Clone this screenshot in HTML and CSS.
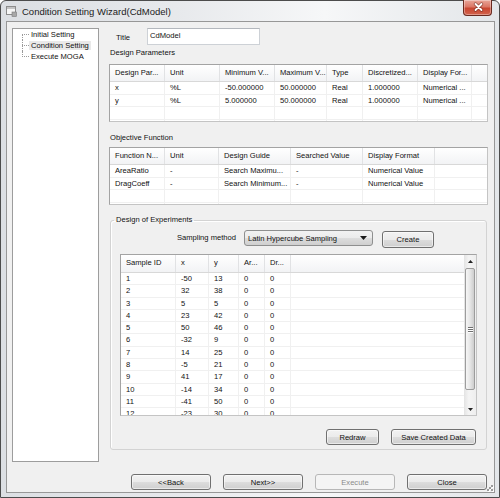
FILE: index.html
```html
<!DOCTYPE html>
<html lang="en">
<head>
  <meta charset="UTF-8" />
  <title>Condition Setting Wizard(CdModel)</title>
  <link rel="stylesheet" href="styles.css">
</head>
<body>
  <div class="window">
    <div class="titlebar">
      <svg class="app-icon" width="11" height="11" viewBox="0 0 11 11">
        <rect x="0.5" y="0.5" width="9" height="8" fill="#f6f6f6" stroke="#8c8c8c" />
        <rect x="1" y="1" width="8" height="2" fill="#c4c4c4" />
        <rect x="6" y="6" width="4.5" height="4.5" fill="#a8a8a8" stroke="#7a7a7a" stroke-width="0.6" />
      </svg>
      <span class="caption">Condition Setting Wizard(CdModel)</span>
      <div class="close-btn">
        <svg width="29" height="15" viewBox="0 0 29 15">
          <path d="M11.5 4 L17.5 10 M17.5 4 L11.5 10" stroke="#5b1d14" stroke-width="3.4" stroke-linecap="round" opacity="0.55" />
          <path d="M11.5 4 L17.5 10 M17.5 4 L11.5 10" stroke="#ffffff" stroke-width="1.8" stroke-linecap="round" />
        </svg>
      </div>
    </div>

    <div class="client">
      <div class="top">
        <div class="tree-panel">
          <ul class="tree">
            <li class="first"><span>Initial Setting</span></li>
            <li class="selected"><span>Condition Setting</span></li>
            <li class="last"><span>Execute MOGA</span></li>
          </ul>
        </div>

        <div class="main">
          <div class="title-row">
            <label class="title-label">Title</label>
            <div class="textbox">CdModel</div>
          </div>

          <div class="section-label">Design Parameters</div>
          <div class="listview">
            <div class="hrow cols-dp">
              <div class="cell">Design Par...</div>
              <div class="cell">Unit</div>
              <div class="cell">Minimum V...</div>
              <div class="cell">Maximum V...</div>
              <div class="cell">Type</div>
              <div class="cell">Discretized...</div>
              <div class="cell">Display For...</div>
              <div class="cell filler"></div>
            </div>
            <div class="row cols-dp">
              <div class="cell">x</div>
              <div class="cell">%L</div>
              <div class="cell">-50.000000</div>
              <div class="cell">50.000000</div>
              <div class="cell">Real</div>
              <div class="cell">1.000000</div>
              <div class="cell">Numerical ...</div>
              <div class="cell filler"></div>
            </div>
            <div class="row cols-dp">
              <div class="cell">y</div>
              <div class="cell">%L</div>
              <div class="cell">5.000000</div>
              <div class="cell">50.000000</div>
              <div class="cell">Real</div>
              <div class="cell">1.000000</div>
              <div class="cell">Numerical ...</div>
              <div class="cell filler"></div>
            </div>
            <div class="row cols-dp">
              <div class="cell"></div><div class="cell"></div><div class="cell"></div><div class="cell"></div>
              <div class="cell"></div><div class="cell"></div><div class="cell"></div><div class="cell filler"></div>
            </div>
            <div class="row cols-dp">
              <div class="cell"></div><div class="cell"></div><div class="cell"></div><div class="cell"></div>
              <div class="cell"></div><div class="cell"></div><div class="cell"></div><div class="cell filler"></div>
            </div>
          </div>

          <div class="section-label gap-top">Objective Function</div>
          <div class="listview obj">
            <div class="hrow cols-of">
              <div class="cell">Function N...</div>
              <div class="cell">Unit</div>
              <div class="cell">Design Guide</div>
              <div class="cell">Searched Value</div>
              <div class="cell">Display Format</div>
              <div class="cell filler"></div>
            </div>
            <div class="row cols-of">
              <div class="cell">AreaRatio</div>
              <div class="cell">-</div>
              <div class="cell">Search Maximu...</div>
              <div class="cell">-</div>
              <div class="cell">Numerical Value</div>
              <div class="cell filler"></div>
            </div>
            <div class="row cols-of">
              <div class="cell">DragCoeff</div>
              <div class="cell">-</div>
              <div class="cell">Search Minimum...</div>
              <div class="cell">-</div>
              <div class="cell">Numerical Value</div>
              <div class="cell filler"></div>
            </div>
            <div class="row cols-of">
              <div class="cell"></div><div class="cell"></div><div class="cell"></div>
              <div class="cell"></div><div class="cell"></div><div class="cell filler"></div>
            </div>
            <div class="row cols-of">
              <div class="cell"></div><div class="cell"></div><div class="cell"></div>
              <div class="cell"></div><div class="cell"></div><div class="cell filler"></div>
            </div>
          </div>

          <fieldset class="group">
            <legend>Design of Experiments</legend>

            <div class="sampling-row">
              <label class="sampling-label">Sampling method</label>
              <div class="combo">
                <span>Latin Hypercube Sampling</span>
                <svg width="7" height="4" viewBox="0 0 7 4"><path d="M0 0 H7 L3.5 4 Z" fill="#1a1a1a" /></svg>
              </div>
              <button class="btn create-btn">Create</button>
            </div>

            <div class="sgrid">
              <div class="sgrid-view">
                <div class="hrow tall cols-doe">
                  <div class="cell">Sample ID</div>
                  <div class="cell">x</div>
                  <div class="cell">y</div>
                  <div class="cell">Ar...</div>
                  <div class="cell">Dr...</div>
                  <div class="cell filler"></div>
                </div>
                <div id="sampleRows"></div>
              </div>
              <div class="scrollbar">
                <div class="sb-btn">
                  <svg width="5" height="3" viewBox="0 0 5 3"><path d="M0 3 H5 L2.5 0 Z" fill="#222" /></svg>
                </div>
                <div class="sb-track">
                  <div class="sb-thumb">
                    <span></span><span></span><span></span>
                  </div>
                </div>
                <div class="sb-btn">
                  <svg width="5" height="3" viewBox="0 0 5 3"><path d="M0 0 H5 L2.5 3 Z" fill="#222" /></svg>
                </div>
              </div>
            </div>

            <div class="grid-buttons">
              <button class="btn redraw-btn">Redraw</button>
              <button class="btn save-btn">Save Created Data</button>
            </div>
          </fieldset>
        </div>
      </div>

      <div class="wizard-buttons">
        <button class="btn wiz">&lt;&lt;Back</button>
        <button class="btn wiz">Next&gt;&gt;</button>
        <button class="btn wiz" disabled>Execute</button>
        <button class="btn wiz">Close</button>
      </div>

      <svg class="grip" width="9" height="9" viewBox="0 0 9 9">
        <g fill="#ffffff">
          <rect x="7" y="3" width="2" height="2" /><rect x="7" y="7" width="2" height="2" /><rect x="3" y="7" width="2" height="2" />
          <rect x="5" y="5" width="2" height="2" />
        </g>
        <g fill="#9a9a9a">
          <rect x="6" y="2" width="2" height="2" /><rect x="6" y="6" width="2" height="2" /><rect x="2" y="6" width="2" height="2" />
          <rect x="4" y="4" width="2" height="2" />
        </g>
      </svg>
    </div>
  </div>

  <script>
    const samples = [
      [1, -50, 13], [2, 32, 38], [3, 5, 5], [4, 23, 42],
      [5, 50, 46], [6, -32, 9], [7, 14, 25], [8, -5, 21],
      [9, 41, 17], [10, -14, 34], [11, -41, 50], [12, -23, 30]
    ];

    const sampleRows = document.getElementById('sampleRows');
    samples.forEach(s => {
      const row = document.createElement('div');
      row.className = 'row srow cols-doe';
      row.innerHTML = `
        <div class="cell">${s[0]}</div>
        <div class="cell">${s[1]}</div>
        <div class="cell">${s[2]}</div>
        <div class="cell">0</div>
        <div class="cell">0</div>
        <div class="cell filler"></div>`;
      sampleRows.appendChild(row);
    });
  </script>
</body>
</html>
```

FILE: styles.css
```css
* {
  box-sizing: border-box;
}

body {
  margin: 0;
  width: 500px;
  height: 498px;
  overflow: hidden;
  background: #ffffff;
  font-family: "Liberation Sans", Arial, sans-serif;
  font-size: 7.6px;
  color: #111;
}

.window {
  position: relative;
  width: 500px;
  height: 498px;
  display: flex;
  flex-direction: column;
  padding: 0 4px 4px 5px;
  border: 1px solid #4c4c4c;
  border-radius: 6px 6px 0 0;
  background: linear-gradient(to right, #dcdfe3 0%, #e7e9ec 35%, #f6f7f8 65%, #e3e6e9 100%);
}

/* title bar */
.titlebar {
  height: 20px;
  display: flex;
  align-items: center;
  flex-shrink: 0;
}

.app-icon {
  margin-right: 5px;
}

.caption {
  font-size: 9.5px;
  color: #1b1b1b;
}

.close-btn {
  position: absolute;
  top: -1px;
  right: 7px;
  width: 29px;
  height: 16px;
  border: 1px solid #6a2a20;
  border-top: none;
  border-radius: 0 0 4px 4px;
  background: linear-gradient(#e9a69a 0%, #db7766 45%, #c94631 55%, #d2634d 100%);
  box-shadow: inset 0 0 0 1px rgba(255, 255, 255, 0.35);
}

.close-btn svg {
  display: block;
}

/* client area */
.client {
  position: relative;
  flex: 1;
  display: flex;
  flex-direction: column;
  padding: 6px 6px 2px 5px;
  border: 1px solid #979797;
  background: #f0f0f0;
}

.top {
  display: flex;
  height: 434px;
}

.tree-panel {
  width: 87px;
  border: 1px solid #9d9d9d;
  background: #ffffff;
}

.tree {
  list-style: none;
  margin: 0;
  padding: 0;
}

.tree li {
  position: relative;
  height: 11px;
  line-height: 11px;
  padding-left: 16px;
  white-space: nowrap;
}

.tree li span {
  padding: 0 2px;
}

.tree li.selected span {
  background: #e9e9e9;
}

.tree li::before {
  content: '';
  position: absolute;
  left: 9px;
  top: 5px;
  width: 7px;
  border-top: 1px dotted #9a9a9a;
}

.tree li::after {
  content: '';
  position: absolute;
  left: 9px;
  top: 0;
  bottom: 0;
  border-left: 1px dotted #9a9a9a;
}

.tree li.first::after {
  top: 5px;
}

.tree li.last::after {
  bottom: auto;
  height: 6px;
}

.main {
  width: 379px;
  margin-left: 10px;
  display: flex;
  flex-direction: column;
}

.title-row {
  height: 17px;
  display: flex;
}

.title-label {
  width: 31px;
  margin-left: 7px;
  padding-top: 5px;
}

.textbox {
  width: 113px;
  height: 17px;
  padding: 2px 0 0 2px;
  border: 1px solid #cdd1d6;
  border-top-color: #b3b7bd;
  background: #ffffff;
  line-height: 9px;
}

.section-label {
  height: 12px;
  line-height: 12px;
  margin: 2px 0 5px 1px;
}

.section-label.gap-top {
  margin: 10px 0 3px 1px;
}

/* list views */
.listview {
  height: 58px;
  border: 1px solid #a3a3a3;
  border-right-color: #c4c4c4;
  border-bottom-color: #c4c4c4;
  background: #ffffff;
  overflow: hidden;
}

.cols-dp {
  grid-template-columns: 55px 55px 55px 52px 36px 55px 54px 1fr;
}

.cols-of {
  grid-template-columns: 55px 54px 72px 72px 72px 1fr;
}

.cols-doe {
  grid-template-columns: 55px 33px 30px 26px 26px 1fr;
}

.hrow {
  display: grid;
  height: 17px;
  border-bottom: 1px solid #d8d8d8;
  background: linear-gradient(#ffffff, #f2f3f5);
}

.hrow.tall {
  height: 18px;
}

.hrow .cell {
  border-right: 1px solid #e1e2e4;
  line-height: 16px;
}

.row {
  display: grid;
  height: 12.5px;
  border-bottom: 1px solid #f0f0f0;
}

.row .cell {
  border-right: 1px solid #f0f0f0;
  line-height: 11.5px;
}

.row.srow {
  height: 12.3px;
}

.cell {
  padding-left: 5px;
  white-space: nowrap;
  overflow: hidden;
}

.cell.filler {
  border-right: none !important;
}

/* design of experiments group */
.group {
  width: 377px;
  margin: 9px 0 0 1px;
  padding: 4px 9px 4px 9px;
  border: 1px solid #d3d3d3;
  border-radius: 3px;
  box-shadow: inset 1px 1px 0 #ffffff;
  min-width: 0;
}

.group legend {
  margin-left: -6px;
  padding: 0 2px;
  height: 12px;
  line-height: 12px;
}

.sampling-row {
  height: 18px;
  display: flex;
  align-items: flex-start;
}

.sampling-label {
  width: 116px;
  text-align: right;
  line-height: 16px;
}

.combo {
  width: 129px;
  height: 16px;
  margin-left: 8px;
  padding: 0 5px 0 3px;
  display: flex;
  align-items: center;
  justify-content: space-between;
  border: 1px solid #8e8f8f;
  border-radius: 3px;
  background: linear-gradient(#f2f2f2 0%, #ebebeb 50%, #dddddd 51%, #cfcfcf 100%);
}

.btn {
  height: 16px;
  padding: 0;
  border: 1px solid #707070;
  border-radius: 3px;
  background: linear-gradient(#f2f2f2 0%, #ebebeb 50%, #dddddd 51%, #cfcfcf 100%);
  box-shadow: inset 0 0 0 1px rgba(255, 255, 255, 0.55);
  font-family: inherit;
  font-size: 7.6px;
  color: #111;
}

.btn:disabled {
  border-color: #b7b7b7;
  background: #f4f4f4;
  box-shadow: none;
  color: #8a8a8a;
}

.create-btn {
  width: 52px;
  height: 17px;
  margin: 1px 0 0 9px;
}

.sgrid {
  height: 162px;
  margin-top: 6px;
  display: flex;
  border: 1px solid #a3a3a3;
  border-right-color: #c4c4c4;
  border-bottom-color: #c4c4c4;
  background: #ffffff;
}

.sgrid-view {
  flex: 1;
  overflow: hidden;
}

.scrollbar {
  width: 12px;
  display: flex;
  flex-direction: column;
  background: linear-gradient(to right, #e3e3e3, #f4f4f4 40%, #eeeeee);
}

.sb-btn {
  height: 12px;
  display: flex;
  align-items: center;
  justify-content: center;
}

.sb-track {
  flex: 1;
  padding-top: 1px;
}

.sb-thumb {
  height: 122px;
  margin: 0 1px;
  display: flex;
  flex-direction: column;
  align-items: center;
  justify-content: center;
  gap: 1px;
  border: 1px solid #9c9c9c;
  border-radius: 2px;
  background: linear-gradient(to right, #f6f6f6, #e6e6e6 50%, #cdcdcd);
}

.sb-thumb span {
  width: 5px;
  height: 1px;
  background: #6f6f6f;
  box-shadow: 0 1px 0 #ffffff;
}

.grid-buttons {
  margin-top: 13px;
  padding-right: 1px;
  display: flex;
  justify-content: flex-end;
  gap: 12px;
}

.redraw-btn {
  width: 53px;
}

.save-btn {
  width: 85px;
}

/* wizard buttons */
.wizard-buttons {
  margin-top: 12px;
  padding-right: 1px;
  display: flex;
  justify-content: flex-end;
  gap: 12px;
}

.btn.wiz {
  width: 80px;
}

.grip {
  position: absolute;
  right: 0;
  bottom: 0;
}
```
